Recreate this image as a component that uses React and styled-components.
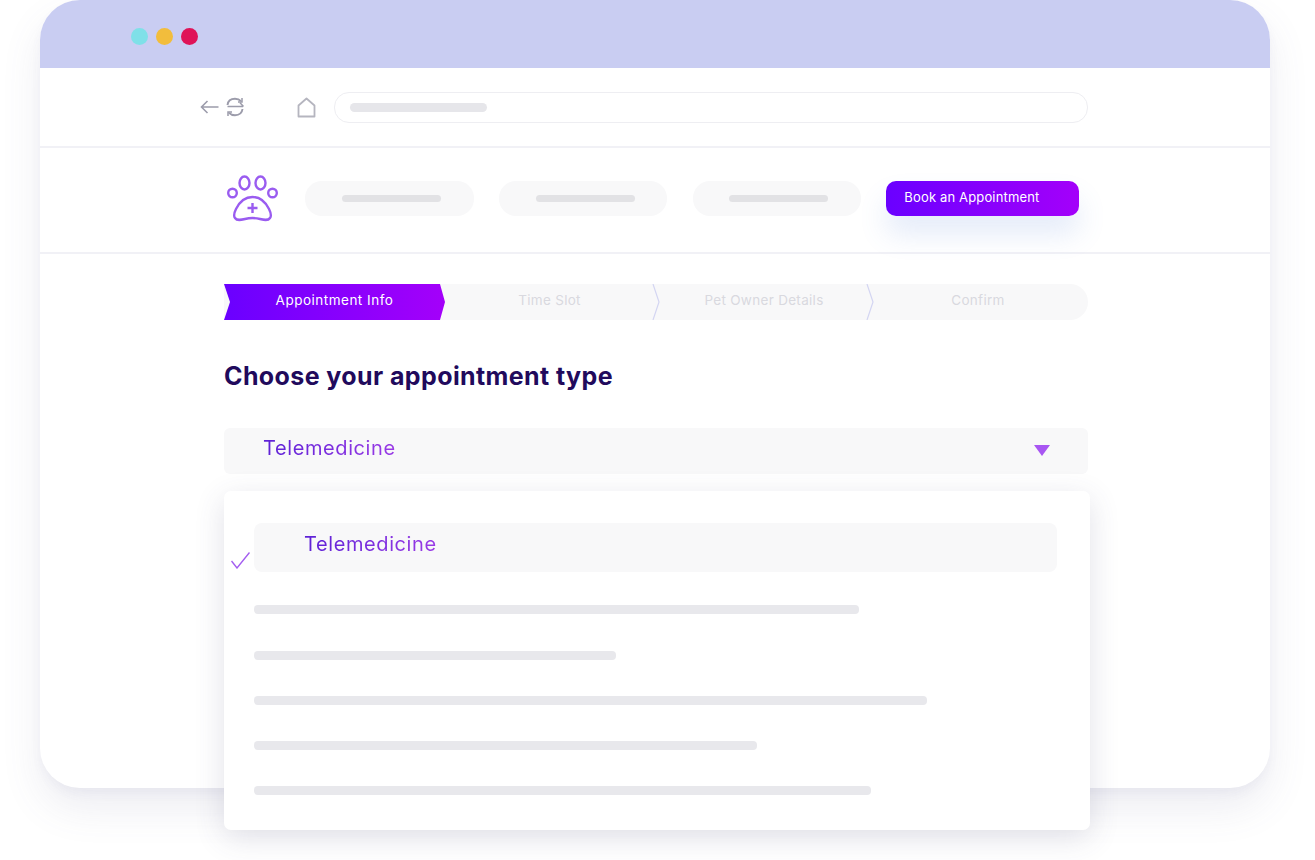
import React from "react";
import styled, { createGlobalStyle } from "styled-components";

const Global = createGlobalStyle`
  html, body { margin: 0; padding: 0; background: #fff; }
  body { font-family: "Inter", "Open Sans", "Liberation Sans", sans-serif; }
  * { box-sizing: border-box; }
`;

const Page = styled.div`
  width: 1315px;
  height: 860px;
  padding-left: 40px;
  overflow: hidden;
  background: #fff;
`;

const Browser = styled.div`
  position: relative;
  width: 1230px;
  height: 788px;
  border-radius: 40px;
  background: #fff;
  box-shadow: 0 6px 10px rgba(90, 90, 150, 0.05), 0 20px 40px rgba(90, 90, 140, 0.11);
`;

const TitleBar = styled.div`
  height: 68px;
  padding: 4px 0 0 91px;
  display: flex;
  align-items: center;
  gap: 8px;
  background: #c9cdf2;
  border-radius: 40px 40px 0 0;
`;

const Dot = styled.span`
  width: 17px;
  height: 17px;
  border-radius: 50%;
  background: ${(p) => p.$color};
`;

const AddressRow = styled.div`
  height: 80px;
  padding: 0 182px 0 160px;
  display: flex;
  align-items: center;
  border-bottom: 2px solid #f1f1f6;
`;

const IconSlot = styled.span`
  display: flex;
  width: ${(p) => p.$w}px;
  margin-right: ${(p) => p.$mr}px;
`;

const UrlBar = styled.div`
  flex: 1;
  height: 31px;
  padding-left: 15px;
  display: flex;
  align-items: center;
  border: 1.5px solid #eeeef2;
  border-radius: 15px;
`;

const UrlStub = styled.div`
  width: 137px;
  height: 9px;
  border-radius: 5px;
  background: #e6e6ea;
`;

const NavRow = styled.div`
  height: 106px;
  padding: 0 0 4px 187px;
  display: flex;
  align-items: center;
  border-bottom: 2px solid #f1f1f6;
`;

const Logo = styled.span`
  display: flex;
  width: 51px;
  height: 47px;
  margin-right: 27px;
`;

const NavPill = styled.div`
  width: 168.6px;
  height: 35px;
  margin-right: 25.2px;
  padding-left: 4px;
  display: flex;
  align-items: center;
  justify-content: center;
  border-radius: 17px;
  background: #f8f8f9;
`;

const NavStub = styled.div`
  width: 99px;
  height: 7px;
  border-radius: 4px;
  background: #e2e2e5;
`;

const BookButton = styled.button`
  width: 193px;
  height: 35px;
  padding: 0 0 3px 18px;
  border: 0;
  border-radius: 10px;
  text-align: left;
  color: #fff;
  font: 400 13px "Inter", sans-serif;
  letter-spacing: 0.15px;
  background: linear-gradient(90deg, #6a00ff, #a400fa);
  box-shadow: 0 18px 28px rgba(90, 130, 220, 0.16);
`;

const Content = styled.div`
  padding: 30px 182px 0 184px;
`;

const Stepper = styled.div`
  height: 36px;
  display: flex;
  border-radius: 0 18px 18px 0;
  background: #f8f8f9;
`;

const Step = styled.div`
  flex: 0 0 ${(p) => p.$w}px;
  padding: 0 6px 4px 0;
  display: flex;
  align-items: center;
  justify-content: center;
  font-size: 13.5px;
  letter-spacing: 0.3px;
  color: #d9d9df;
`;

const ActiveStep = styled(Step)`
  padding-right: 0;
  letter-spacing: 0.5px;
  color: #fff;
  background: linear-gradient(90deg, #6a00ff, #a400fa);
  clip-path: polygon(0 0, 216px 0, 221px 50%, 216px 100%, 0 100%, 6px 50%);
`;

const Chevron = styled.svg`
  flex: 0 0 8px;
  width: 8px;
  height: 36px;
  margin-left: -8px;
`;

const Heading = styled.h1`
  margin: 41px 0 0;
  font-size: 25px;
  line-height: 30px;
  font-weight: 700;
  letter-spacing: 0.4px;
  color: #210a5c;
`;

const Select = styled.div`
  height: 46px;
  margin-top: 37px;
  padding: 0 38px 6px 39px;
  display: flex;
  align-items: center;
  justify-content: space-between;
  border-radius: 6px;
  background: #f8f8f9;
`;

const OptionText = styled.span`
  font-size: 20px;
  font-weight: 400;
  letter-spacing: 0.6px;
  color: transparent;
  background: linear-gradient(90deg, #5d21d6, #9a3be6);
  -webkit-background-clip: text;
  background-clip: text;
`;

const Caret = styled.span`
  width: 0;
  height: 0;
  margin-top: 5px;
  border-left: 8.5px solid transparent;
  border-right: 8.5px solid transparent;
  border-top: 11px solid #a856f2;
`;

const Dropdown = styled.div`
  position: absolute;
  left: 184px;
  top: 491px;
  width: 866px;
  height: 339px;
  padding: 32px 33px 0 30px;
  border-radius: 7px;
  background: #fff;
  box-shadow: 0 8px 30px rgba(70, 70, 110, 0.16);
`;

const SelectedOption = styled.div`
  position: relative;
  height: 49px;
  padding: 0 0 8px 50px;
  display: flex;
  align-items: center;
  border-radius: 8px;
  background: #f8f8f9;
`;

const Check = styled.svg`
  position: absolute;
  left: -23px;
  top: 29px;
  width: 19px;
  height: 17px;
`;

const Lines = styled.div`
  margin-top: 33.3px;
  display: flex;
  flex-direction: column;
  gap: 36.25px;
`;

const Line = styled.div`
  width: ${(p) => p.$w}px;
  height: 9px;
  border-radius: 4px;
  background: #e8e8ec;
`;

const ICON = "#9c9cab";

export default function App() {
  return (
    <Page>
      <Global />
      <Browser>
        <TitleBar>
          <Dot $color="#7fe0e8" />
          <Dot $color="#f2bd3c" />
          <Dot $color="#df1358" />
        </TitleBar>
        <AddressRow>
          <IconSlot $w={19} $mr={6}>
            <svg width="19" height="14" viewBox="0 0 19 14" fill="none" stroke={ICON} strokeWidth="1.6">
              <path d="M18.500 7H1.500M7.500 1L1.500 7l6 6" />
            </svg>
          </IconSlot>
          <IconSlot $w={20} $mr={52}>
            <svg width="20" height="20" viewBox="0 0 20 20" fill="none" stroke={ICON} strokeWidth="1.900">
              <path d="M2.500 8C3 4 6 1.800 10 1.800c2.500 0 4.500 .8 6 2.400" />
              <path d="M17.500 12C17 16 14 18.200 10 18.200c-2.500 0-4.500-.8-6-2.400" />
              <path d="M2.500 9.500H18M15 5.800l3.500 3.700" strokeWidth="1.500" />
              <path d="M17 1v4h-4M3 19v-4h4" strokeWidth="1.500" />
            </svg>
          </IconSlot>
          <IconSlot $w={19} $mr={18}>
            <svg width="19" height="21" viewBox="0 0 19 21" fill="none" stroke="#b5b5bf" strokeWidth="1.800" strokeLinejoin="round">
              <path d="M1.500 19.500V8.500L9.500 1.500l8 7v11z" />
            </svg>
          </IconSlot>
          <UrlBar>
            <UrlStub />
          </UrlBar>
        </AddressRow>
        <NavRow>
          <Logo>
            <svg width="51" height="47" viewBox="0 0 51 47" fill="none" stroke="#9a5cf0" strokeWidth="2.400">
              <circle cx="5.500" cy="18" r="4.300" />
              <circle cx="45.500" cy="18" r="4.300" />
              <ellipse cx="17.500" cy="8" rx="5" ry="6.500" />
              <ellipse cx="33.500" cy="8" rx="5" ry="6.500" />
              <path d="M25.500 22C17 22 12 28 9 34C7 38 6.500 41 8 43C10 46 14 45 18 44C22 43 29 43 33 44C37 45 41 46 43 43C44.500 41 44 38 42 34C39 28 34 22 25.500 22Z" />
              <path d="M25.500 28v10M20.500 33h10" />
            </svg>
          </Logo>
          <NavPill><NavStub /></NavPill>
          <NavPill><NavStub /></NavPill>
          <NavPill><NavStub /></NavPill>
          <BookButton>Book an Appointment</BookButton>
        </NavRow>
        <Content>
          <Stepper>
            <ActiveStep $w={221}>Appointment Info</ActiveStep>
            <Step $w={215}>Time Slot</Step>
            <Chevron viewBox="0 0 8 36" fill="none" stroke="#d3d5f2" strokeWidth="1.200"><path d="M1 0l6 18L1 36" /></Chevron>
            <Step $w={214}>Pet Owner Details</Step>
            <Chevron viewBox="0 0 8 36" fill="none" stroke="#d3d5f2" strokeWidth="1.200"><path d="M1 0l6 18L1 36" /></Chevron>
            <Step $w={214}>Confirm</Step>
          </Stepper>
          <Heading>Choose your appointment type</Heading>
          <Select>
            <OptionText>Telemedicine</OptionText>
            <Caret />
          </Select>
        </Content>
        <Dropdown>
          <SelectedOption>
            <Check viewBox="0 0 19 17" fill="none" stroke="#a35df0" strokeWidth="1.400">
              <path d="M0.500 9l5.500 7L18.500 0.500" />
            </Check>
            <OptionText>Telemedicine</OptionText>
          </SelectedOption>
          <Lines>
            <Line $w={605} />
            <Line $w={362} />
            <Line $w={673} />
            <Line $w={503} />
            <Line $w={617} />
          </Lines>
        </Dropdown>
      </Browser>
    </Page>
  );
}
